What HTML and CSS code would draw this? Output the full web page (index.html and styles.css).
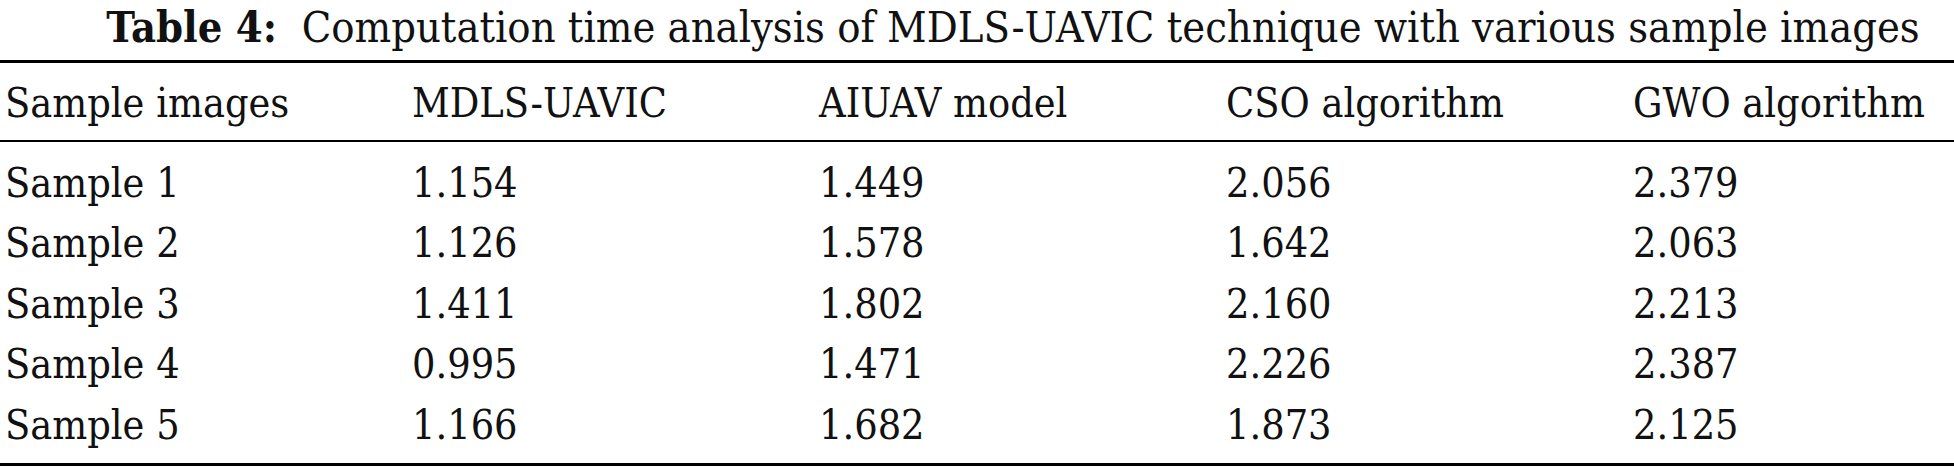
FILE: index.html
```html
<!DOCTYPE html>
<html lang="en">
<head>
  <meta charset="UTF-8">
  <title>Table 4: Computation time analysis</title>
  <link rel="stylesheet" href="styles.css">
</head>
<body>
  <div class="table-wrap">
    <p class="caption"><b>Table 4:</b>&nbsp; Computation time analysis of MDLS-UAVIC technique with various sample images</p>
    <table class="data-table">
      <thead>
        <tr>
          <th>Sample images</th>
          <th>MDLS-UAVIC</th>
          <th>AIUAV model</th>
          <th>CSO algorithm</th>
          <th>GWO algorithm</th>
        </tr>
      </thead>
      <tbody>
        <tr class="first-row"><td>Sample 1</td><td>1.154</td><td>1.449</td><td>2.056</td><td>2.379</td></tr>
        <tr><td>Sample 2</td><td>1.126</td><td>1.578</td><td>1.642</td><td>2.063</td></tr>
        <tr><td>Sample 3</td><td>1.411</td><td>1.802</td><td>2.160</td><td>2.213</td></tr>
        <tr><td>Sample 4</td><td>0.995</td><td>1.471</td><td>2.226</td><td>2.387</td></tr>
        <tr class="last-row"><td>Sample 5</td><td>1.166</td><td>1.682</td><td>1.873</td><td>2.125</td></tr>
      </tbody>
    </table>
  </div>
</body>
</html>
```

FILE: styles.css
```css
* {
  box-sizing: border-box;
  margin: 0;
  padding: 0;
}
body {
  background-color: #fff;
  color: #111;
  font-family: "DejaVu Serif Condensed", "DejaVu Serif", serif;
  font-stretch: condensed;
}
.table-wrap {
  width: 1954px;
}
.caption {
  font-size: 43px;
  line-height: 54px;
  text-align: center;
  padding-left: 72px;
  margin-bottom: 6px;
  white-space: nowrap;
}
.caption b {
  font-weight: bold;
}
.data-table {
  width: 100%;
  border-collapse: collapse;
  font-size: 41px;
  table-layout: fixed;
}
.data-table th,
.data-table td {
  text-align: left;
  font-weight: normal;
  padding: 0 0 0 5px;
  line-height: 60.5px;
  white-space: nowrap;
}
.data-table th:nth-child(-n+4),
.data-table td:nth-child(-n+4) {
  width: 407px;
}
.data-table thead tr {
  border-top: 3px solid #000;
  border-bottom: 2px solid #000;
}
.data-table thead th {
  padding-top: 10px;
  padding-bottom: 6px;
}
.data-table .first-row td {
  padding-top: 11px;
}
.data-table .last-row td {
  padding-bottom: 8px;
}
.data-table tbody {
  border-bottom: 3px solid #000;
}
```
